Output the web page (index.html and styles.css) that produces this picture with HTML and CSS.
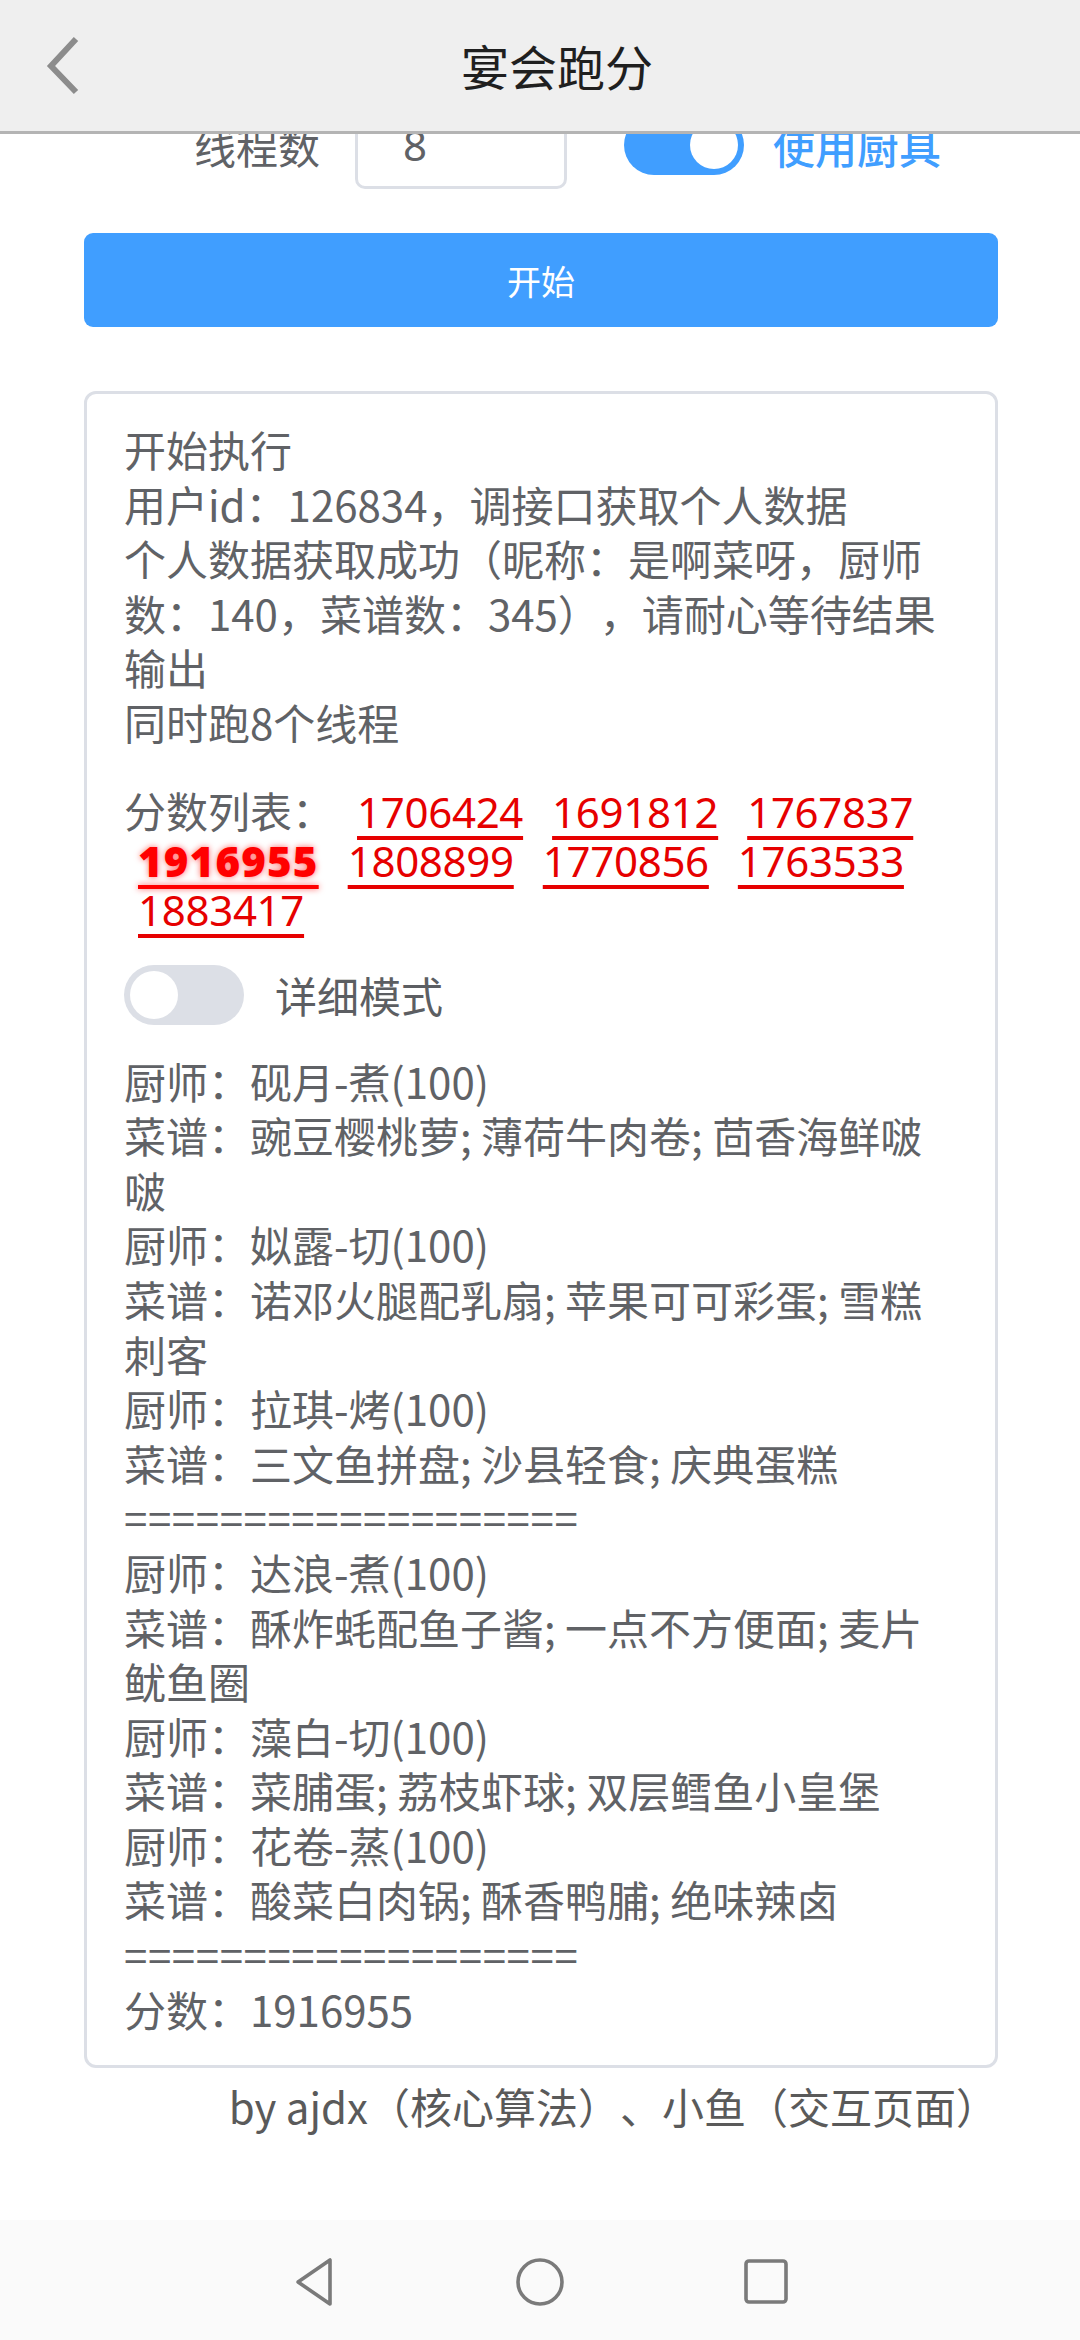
FILE: index.html
```html
<!DOCTYPE html>
<html lang="zh-CN">
<head>
<meta charset="utf-8">
<title>宴会跑分</title>
<link rel="stylesheet" href="styles.css">
</head>
<body>
<header class="topbar">
  <svg class="back" viewBox="0 0 40 60" width="40" height="60"><polyline points="34,4 9,31 34,57" fill="none" stroke="#8c8c8c" stroke-width="6" stroke-linejoin="miter"/></svg>
  <div class="title">宴会跑分</div>
</header>

<main class="page">
  <div class="opts">
    <span class="opt-label">线程数</span>
    <div class="num-input">8</div>
    <span class="switch on"><span class="knob"></span></span>
    <span class="opt-blue">使用厨具</span>
  </div>

  <button class="start-btn">开始</button>

  <section class="card">
    <div class="log">
      <div>开始执行</div>
      <div>用户id：126834，调接口获取个人数据</div>
      <div>个人数据获取成功（昵称：是啊菜呀，厨师数：140，菜谱数：345），请耐心等待结果输出</div>
      <div>同时跑8个线程</div>
    </div>

    <div class="scores">
      <span class="scores-label">分数列表：</span>
      <a class="score">1706424</a>
      <a class="score">1691812</a>
      <a class="score">1767837</a>
      <a class="score best">1916955</a>
      <a class="score">1808899</a>
      <a class="score">1770856</a>
      <a class="score">1763533</a>
      <a class="score">1883417</a>
    </div>

    <div class="detail-toggle">
      <span class="switch off"><span class="knob"></span></span>
      <span class="detail-label">详细模式</span>
    </div>

    <div class="log result">
      <div>厨师：砚月-煮(100)</div>
      <div>菜谱：豌豆樱桃萝; 薄荷牛肉卷; 茴香海鲜啵啵</div>
      <div>厨师：姒露-切(100)</div>
      <div>菜谱：诺邓火腿配乳扇; 苹果可可彩蛋; 雪糕刺客</div>
      <div>厨师：拉琪-烤(100)</div>
      <div>菜谱：三文鱼拼盘; 沙县轻食; 庆典蛋糕</div>
      <div class="sep">===================</div>
      <div>厨师：达浪-煮(100)</div>
      <div>菜谱：酥炸蚝配鱼子酱; 一点不方便面; 麦片鱿鱼圈</div>
      <div>厨师：藻白-切(100)</div>
      <div>菜谱：菜脯蛋; 荔枝虾球; 双层鳕鱼小皇堡</div>
      <div>厨师：花卷-蒸(100)</div>
      <div>菜谱：酸菜白肉锅; 酥香鸭脯; 绝味辣卤</div>
      <div class="sep">===================</div>
      <div>分数：1916955</div>
    </div>
  </section>

  <div class="credit">by ajdx（核心算法）、小鱼（交互页面）</div>
</main>

<nav class="sysnav">
  <svg viewBox="0 0 48 52" width="48" height="52"><path d="M40 4 L40 48 L8 26 Z" fill="none" stroke="#7a7a7a" stroke-width="3.6" stroke-linejoin="round"/></svg>
  <svg viewBox="0 0 52 52" width="52" height="52"><circle cx="26" cy="26" r="22" fill="none" stroke="#7a7a7a" stroke-width="3.6"/></svg>
  <svg viewBox="0 0 48 52" width="48" height="52"><rect x="4" y="5" width="40" height="41" rx="3" fill="none" stroke="#7a7a7a" stroke-width="3.6"/></svg>
</nav>
</body>
</html>
```

FILE: styles.css
```css
* { box-sizing: border-box; }
html, body {
  margin: 0;
  padding: 0;
  background: #ffffff;
}
body {
  width: 1080px;
  height: 2340px;
  overflow: hidden;
  font-family: "Noto Sans CJK SC", "Noto Sans", sans-serif;
  color: #606266;
  text-spacing-trim: space-all;
}

/* top app bar (overlays scrolled content) */
.topbar {
  position: fixed;
  top: 0;
  left: 0;
  right: 0;
  height: 134px;
  background: #efefef;
  border-bottom: 3px solid #b4b4b4;
  display: flex;
  align-items: center;
  justify-content: center;
  z-index: 10;
}
.back {
  position: absolute;
  left: 42px;
  top: 35px;
}
.title {
  font-size: 48px;
  color: #1f1f1f;
  padding-left: 34px;
  padding-bottom: 2px;
}

.page {
  padding: 101px 82px 0 84px;
}

/* options row */
.opts {
  display: flex;
  align-items: center;
  height: 88px;
}
.opt-label {
  margin-left: 110px;
  font-size: 42px;
  color: #606266;
}
.num-input {
  margin-left: 35px;
  width: 212px;
  height: 88px;
  border: 3px solid #dcdfe6;
  border-radius: 10px;
  padding-left: 45px;
  font-size: 42px;
  line-height: 82px;
  color: #606266;
  font-family: "Noto Sans", sans-serif;
}
.switch {
  position: relative;
  display: inline-block;
  width: 120px;
  height: 60px;
  border-radius: 30px;
  flex-shrink: 0;
}
.switch.on { background: #409eff; margin-left: 57px; }
.switch.off { background: #dcdfe6; }
.knob {
  position: absolute;
  top: 6px;
  width: 48px;
  height: 48px;
  border-radius: 50%;
  background: #ffffff;
}
.switch.on .knob { right: 6px; }
.switch.off .knob { left: 6px; }
.opt-blue {
  margin-left: 29px;
  font-size: 42px;
  font-weight: 500;
  color: #409eff;
}

/* start button */
.start-btn {
  display: block;
  width: 914px;
  height: 94px;
  margin: 44px 0 0 0;
  border: none;
  border-radius: 9px;
  background: #409eff;
  color: #ffffff;
  font-family: inherit;
  font-size: 34px;
  padding: 0;
}

/* result card */
.card {
  margin-top: 64px;
  width: 914px;
  border: 3px solid #dcdfe6;
  border-radius: 12px;
  padding: 28px 38px 29px 37px;
}
.log {
  font-size: 42px;
  line-height: 54.6px;
  color: #606266;
}
.sep {
  letter-spacing: 0.6px;
}
.scores {
  display: flex;
  flex-wrap: wrap;
  align-items: baseline;
  margin-top: 35px;
  font-size: 42px;
  line-height: 49px;
}
.scores-label {
  margin-right: 9px;
}
.score {
  margin: 0 15px 0 14px;
  color: #e60000;
  text-decoration: underline;
  text-decoration-thickness: 4px;
  text-underline-offset: 8px;
  font-family: "Noto Sans", sans-serif;
  letter-spacing: -0.3px;
}
.score.best {
  font-weight: 900;
  color: #ff0000;
  letter-spacing: 1.2px;
  text-shadow: 0 0 6px rgba(255, 0, 0, 0.6);
}
.detail-toggle {
  display: flex;
  align-items: center;
  margin-top: 32px;
  height: 58px;
}
.detail-label {
  margin-left: 31px;
  font-size: 42px;
  color: #5c5e62;
}
.result {
  margin-top: 30px;
}

.credit {
  width: 914px;
  margin-top: 10px;
  text-align: right;
  font-size: 42px;
  line-height: 55px;
  color: #5a5a5a;
}

/* system navigation bar */
.sysnav {
  position: fixed;
  left: 0;
  right: 0;
  bottom: 0;
  height: 120px;
  background: #fafafa;
  display: flex;
  align-items: center;
  justify-content: center;
  gap: 176px;
  padding-top: 4px;
}
```
